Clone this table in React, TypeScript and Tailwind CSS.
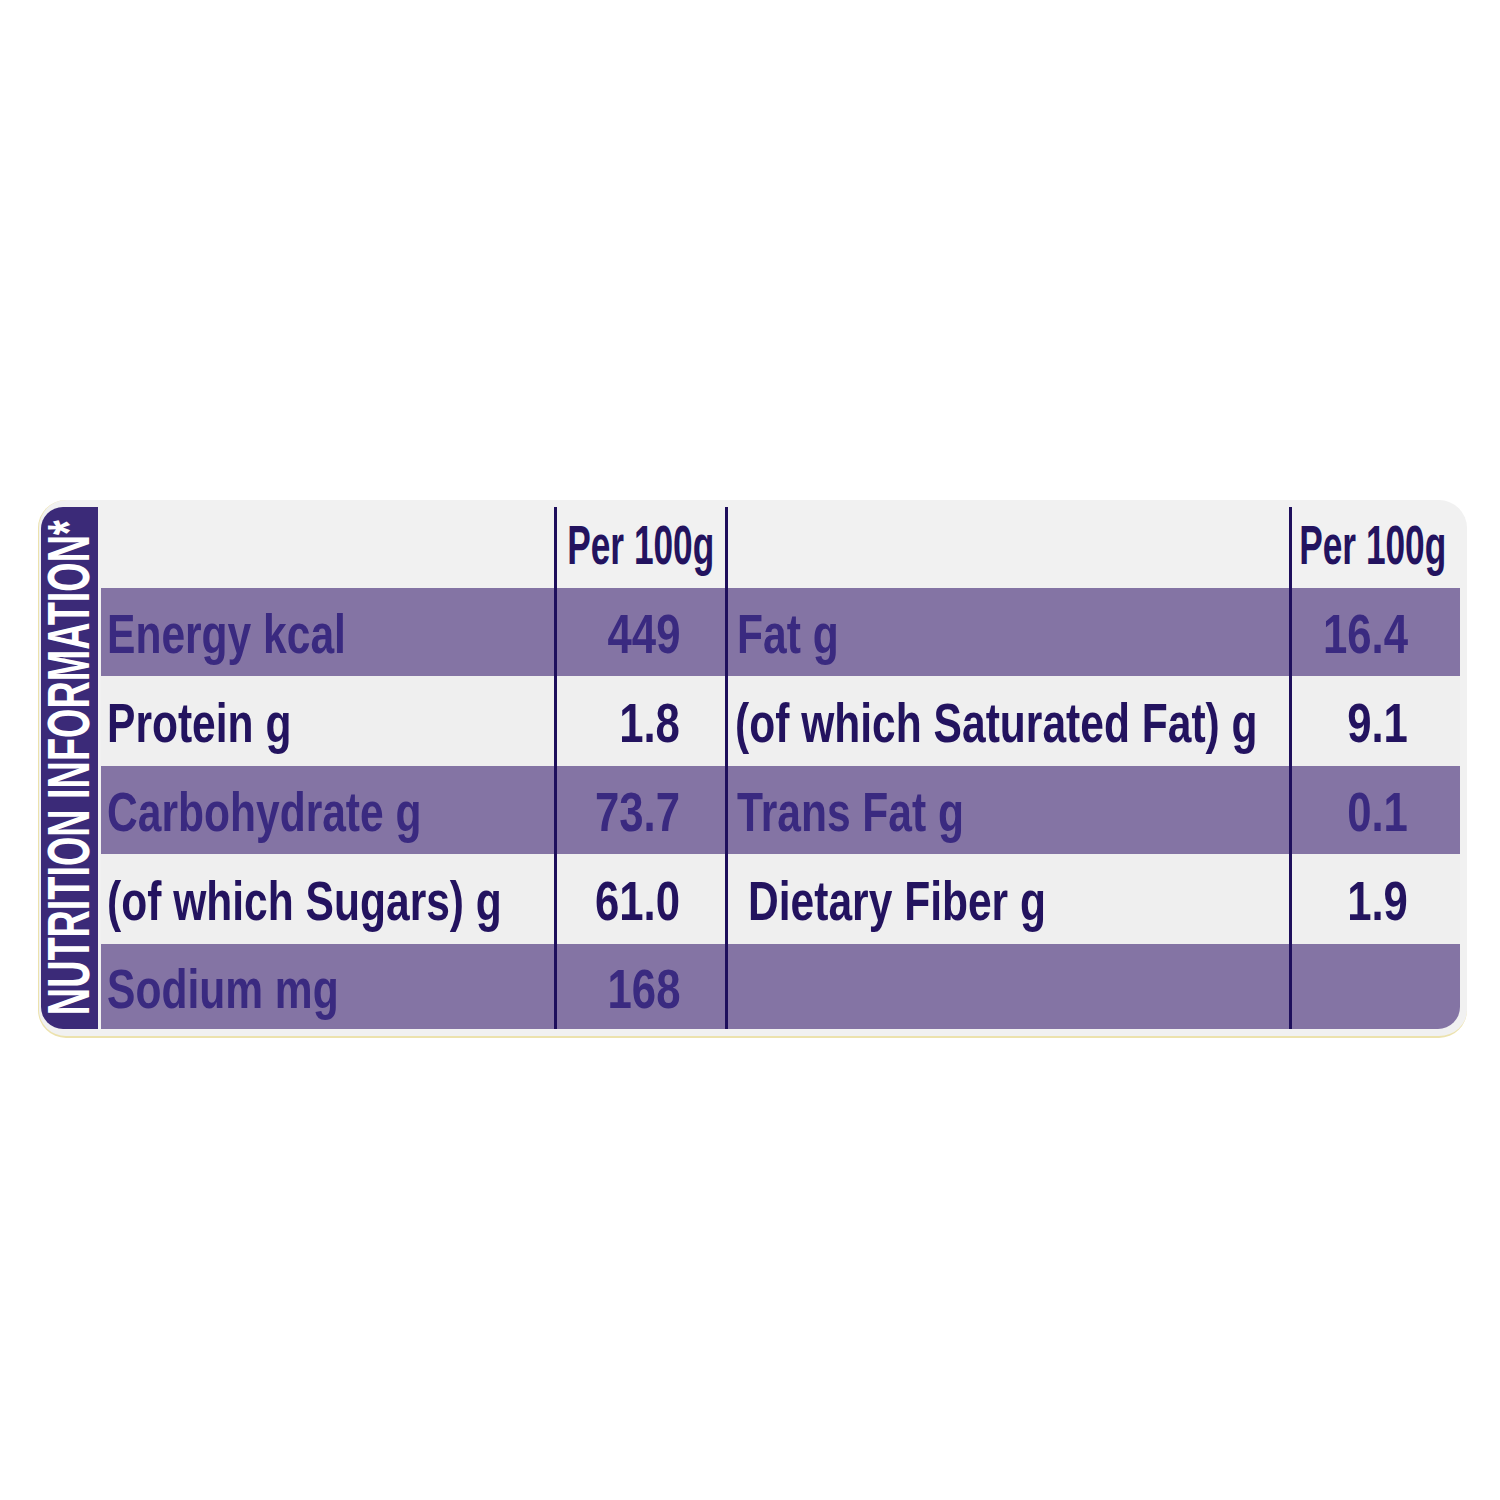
import React from "react";

const FONT = "font-['Liberation_Sans','Arial',sans-serif]";

type Row = {
  h: string;
  purple: boolean;
  l1: string;
  v1: string;
  l2: string;
  v2: string;
  l2pad?: string;
  last?: boolean;
};

const rows: Row[] = [
  { h: "h-[88px]", purple: true, l1: "Energy kcal", v1: "449", l2: "Fat g", v2: "16.4" },
  { h: "h-[90px]", purple: false, l1: "Protein g", v1: "1.8", l2: "(of which Saturated Fat) g", v2: "9.1", l2pad: "pl-[7px]" },
  { h: "h-[88px]", purple: true, l1: "Carbohydrate g", v1: "73.7", l2: "Trans Fat g", v2: "0.1" },
  { h: "h-[90px]", purple: false, l1: "(of which Sugars) g", v1: "61.0", l2: "Dietary Fiber g", v2: "1.9", l2pad: "pl-[20px]" },
  { h: "h-[85px]", purple: true, l1: "Sodium mg", v1: "168", l2: "", v2: "", last: true },
];

function Label({ t }: { t: string }) {
  return <span className="inline-block shrink-0 whitespace-nowrap origin-left scale-x-[0.76]">{t}</span>;
}

function Num({ t }: { t: string }) {
  return <span className="inline-block shrink-0 whitespace-nowrap origin-right scale-x-[0.78]">{t}</span>;
}

function DataRow({ r }: { r: Row }) {
  const bg = r.purple ? "bg-[#8474a4]" : "bg-[#efefef]";
  const tc = r.purple ? "text-[#3a2a80]" : "text-[#23135f]";
  return (
    <div className={`flex ${r.h} ${bg} ${tc} ${r.last ? "rounded-br-[22px]" : ""}`}>
      <div className="w-[453px] flex items-center pl-[6px] pt-[4px] overflow-visible">
        <Label t={r.l1} />
      </div>
      <div className="w-[171px] border-l-[3px] border-[#1e0f5c] flex items-center justify-end pr-[45px] pt-[4px]">
        <Num t={r.v1} />
      </div>
      <div className={`w-[564px] border-l-[3px] border-[#1e0f5c] flex items-center ${r.l2pad ?? "pl-[9px]"} pt-[4px]`}>
        <Label t={r.l2} />
      </div>
      <div className="w-[171px] border-l-[3px] border-[#1e0f5c] flex items-center justify-end pr-[52px] pt-[4px]">
        <Num t={r.v2} />
      </div>
    </div>
  );
}

export default function App() {
  return (
    <div className="w-[1500px] h-[1500px] bg-white pt-[500px] pl-[38px]">
      <div
        className={`w-[1429px] h-[538px] bg-[#f1f1f1] rounded-[28px] border-b-[2px] border-l-[1px] border-[#ece2ad] flex pt-[7px] pr-[7px] pb-[6px] pl-[2px] ${FONT}`}
      >
        <div className="w-[57px] h-[522px] shrink-0 bg-[#3b2a78] rounded-l-[22px] flex items-center justify-center overflow-hidden">
          <div className="shrink-0 [writing-mode:vertical-rl] rotate-180 scale-y-[0.63] text-white font-bold text-[60px] leading-none whitespace-nowrap pl-[2px]">
            NUTRITION INFORMATION*
          </div>
        </div>
        <div className="ml-[3px] flex flex-col text-[56px] font-bold leading-none">
          <div className="flex h-[81px] text-[#23135f]">
            <div className="w-[453px]" />
            <div className="w-[171px] border-l-[3px] border-[#1e0f5c] flex items-center justify-center pb-[6px]">
              <span className="inline-block shrink-0 whitespace-nowrap origin-center scale-x-[0.63]">Per 100g</span>
            </div>
            <div className="w-[564px] border-l-[3px] border-[#1e0f5c]" />
            <div className="w-[171px] border-l-[3px] border-[#1e0f5c] flex items-center justify-center pb-[6px] pr-[6px]">
              <span className="inline-block shrink-0 whitespace-nowrap origin-center scale-x-[0.63]">Per 100g</span>
            </div>
          </div>
          {rows.map((r, i) => (
            <DataRow key={i} r={r} />
          ))}
        </div>
      </div>
    </div>
  );
}
